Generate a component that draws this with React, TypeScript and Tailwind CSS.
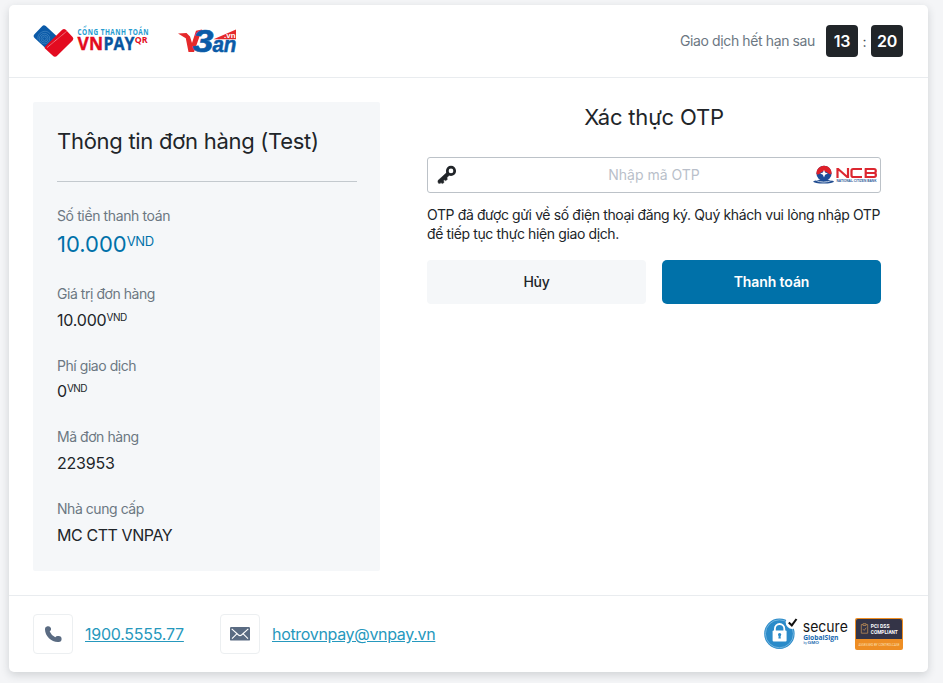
import React from "react";

function VnpayLogo() {
  return (
    <svg width="116" height="34" viewBox="0 0 116 34" className="block overflow-visible">
      <rect x="-9.6" y="-8.2" width="19.2" height="16.4" rx="2.6" transform="translate(12.3 12.8) rotate(43)" fill="#0b5aa8" />
      <g fill="none" stroke="#69a3d5" strokeWidth=".55" opacity=".8">
        <circle cx="11.5" cy="14.6" r="1.8" />
        <circle cx="11.5" cy="14.6" r="3.5" />
        <circle cx="11.5" cy="14.6" r="5.2" />
        <path d="M5 15.6a7 7 0 0 1 12-6" />
      </g>
      <path d="M12.2 22.4 29.2 5.8Q31 4.1 32.8 5.8L39.6 13Q41.2 14.6 39.6 16.4L24.4 31.6Q22 34 19.6 31.6L12 24.6Q11 23.6 12.2 22.4Z" fill="#e30b20" />
      <path d="M14 23.6 33.8 7.2" stroke="#fbd3d6" strokeWidth=".7" strokeDasharray="1 .5" fill="none" />
      <text x="54.6" y="11" transform="scale(.815 1)" fontFamily="Open Sans, sans-serif" fontWeight="700" fontSize="7.9" textLength="87" fill="#269bd0">CỔNG THANH TOÁN</text>
      <text y="26.2" fontFamily="Open Sans, sans-serif" fontWeight="700" fontSize="17.8" fill="#e30b20">
        <tspan x="44.6" textLength="25.4" lengthAdjust="spacingAndGlyphs" stroke="#e30b20" strokeWidth=".35">VN</tspan>
        <tspan x="70.4" textLength="31" lengthAdjust="spacingAndGlyphs" fill="#07549f" stroke="#07549f" strokeWidth=".35">PAY</tspan>
        <tspan x="101.8" y="19.4" fontSize="9.4" textLength="12.8" lengthAdjust="spacingAndGlyphs">QR</tspan>
      </text>
    </svg>
  );
}

function VbanLogo() {
  return (
    <svg width="60" height="26" viewBox="0 0 60 26" className="block overflow-visible">
      <path d="M0 5.5 8.5 5 12 8.5 14 15 18 2.8 24 1.4 16 24 10.5 24 7.8 10.2Z" fill="#e5292b" />
      <text x="0" y="0" transform="translate(14.8 23.6) scale(1.2 1)" fontFamily="Liberation Sans, sans-serif" fontWeight="700" fontStyle="italic" fontSize="31" fill="#0b5ba7" stroke="#0b5ba7" strokeWidth=".6">3</text>
      <path d="M35.5 11.2 58 1.5V11.2Z" fill="#e5292b" />
      <text y="23.8" fontFamily="Liberation Sans, sans-serif" fontWeight="700" fontStyle="italic" fontSize="21.5" fill="#0b5ba7">
        <tspan x="34.4" textLength="24" lengthAdjust="spacingAndGlyphs" stroke="#0b5ba7" strokeWidth=".5">an</tspan>
        <tspan x="46" y="10.3" fontSize="7" fontStyle="normal" textLength="11.5" lengthAdjust="spacingAndGlyphs" fill="#fff">.vn</tspan>
      </text>
    </svg>
  );
}

function KeyIcon() {
  return (
    <svg width="20" height="20" viewBox="0 0 20 20" className="block">
      <circle cx="14" cy="5.9" r="3.7" fill="none" stroke="#212529" strokeWidth="2.7" />
      <path d="M9.9 7.4 12.5 10 9.9 12.4 10.2 14.6 8.4 15.6 7.2 14.8 6.5 15.6 6.9 17.6 5.2 18.5 4 17.6 3.2 18.3H1.6L1 17V15.6Z" fill="#212529" stroke="#212529" strokeWidth=".6" strokeLinejoin="round" />
    </svg>
  );
}

function NcbLogo() {
  return (
    <svg width="64" height="20" viewBox="0 0 64 20" className="block shrink-0 overflow-visible">
      <ellipse cx="10.6" cy="16.6" rx="10.4" ry="2" fill="#234e91" />
      <path d="M2.5 15.2Q10.5 19 19 15.2" fill="none" stroke="#c2d2e6" strokeWidth="1" />
      <circle cx="11" cy="8.4" r="7.6" fill="#1c4d99" />
      <path d="M3.6 9C2.9 4.5 6.8.8 11 .8s8 3.5 7.5 8C16 10.8 14.6 6.3 11 6.3S6.5 11.1 3.6 9Z" fill="#df2029" />
      <path d="m11 4.8 1.1 2.7 2.8 1.1-2.8 1.1L11 12.4 9.9 9.7 7.1 8.6l2.8-1.1Z" fill="#fff" />
      <g fill="none" stroke="#dc2730" strokeWidth="2.2">
        <path d="M24.5 13V4h.7l9 8h.8V3" />
        <path d="M49 4H40.2Q38.5 4 38.5 5.7v4.6Q38.5 12 40.2 12H49" />
        <path d="M51.7 4H61Q62.8 4 62.8 5.9T61 8H52.7M61 8Q62.9 8.1 62.9 10T61 12H52.7V4" />
      </g>
      <text x="23.5" y="17" fontFamily="Liberation Sans, sans-serif" fontWeight="700" fontSize="2.7" textLength="40" lengthAdjust="spacingAndGlyphs" fill="#315c99">NATIONAL CITIZEN BANK</text>
    </svg>
  );
}

function PhoneIcon() {
  return (
    <svg width="18" height="18" viewBox="0 0 18 18" className="block" fill="#5a6b82">
      <path d="M1 4.4A3.1 3.1 0 0 1 7 3.2Q7.6 5.2 5.7 6.5Q7.2 10.2 11.3 12.2Q12.4 10.6 14.6 11A3 3 0 0 1 14.6 17C8 17.6 1 11 1 4.4Z" />
    </svg>
  );
}

function MailIcon() {
  return (
    <svg width="20" height="14" viewBox="0 0 20 14" className="block">
      <rect width="20" height="13.6" rx="1.2" fill="#5a6b82" />
      <path d="M1.7 1.8 8.5 8Q10 9.2 11.5 8L18.3 1.8M2 11.7 6.8 6.9M18 11.7 13.2 6.9" fill="none" stroke="#fff" strokeWidth="1.1" />
    </svg>
  );
}

function GlobalSignBadge() {
  return (
    <svg width="86" height="34" viewBox="0 0 86 34" className="block overflow-visible">
      <circle cx="15.4" cy="16.8" r="15.2" fill="#2b8bc9" />
      <circle cx="15.4" cy="16.8" r="14" fill="none" stroke="#91c5e6" strokeWidth=".7" />
      <circle cx="28.2" cy="5.5" r="6.5" fill="#fff" />
      <path d="m24.8 5.5 3 2.9L32.5 2" fill="none" stroke="#111" strokeWidth="2.1" />
      <path d="M10.9 14v-2.3a4.7 4.7 0 0 1 9.4 0V14" fill="none" stroke="#fff" strokeWidth="1.8" />
      <rect x="8.6" y="13.4" width="14" height="11.2" rx="1" fill="#fff" />
      <circle cx="15.6" cy="17.6" r="1.6" fill="#2b8bc9" />
      <path d="M14.8 17.6h1.6l.4 4h-2.4Z" fill="#2b8bc9" />
      <text fill="#1769af">
        <tspan x="38.8" y="14.8" fontFamily="Inter, sans-serif" fontSize="15" textLength="45" lengthAdjust="spacingAndGlyphs" fill="#151515">secure</tspan>
        <tspan x="39.2" y="22.6" fontFamily="Open Sans, sans-serif" fontWeight="700" fontSize="7" textLength="35.3" lengthAdjust="spacingAndGlyphs">GlobalSign</tspan>
        <tspan x="39.4" y="27" fontFamily="Liberation Sans, sans-serif" fontSize="3.2">by</tspan>
        <tspan x="43.6" y="27" fontFamily="Liberation Sans, sans-serif" fontWeight="700" fontSize="3.2" textLength="11.5" lengthAdjust="spacingAndGlyphs">GMO</tspan>
      </text>
    </svg>
  );
}

function PciBadge() {
  return (
    <svg width="48" height="32" viewBox="0 0 48 32" className="block overflow-visible">
      <rect width="48" height="32" rx="2" fill="#ee8e24" />
      <path d="M1 3q0-2 2-2h42q2 0 2 2v18H1Z" fill="#343447" />
      <path d="M8 6.5H6.3v8.7h6.4V6.5H11M8 5.7h3v1.8H8ZM8 11.2l1.2 1.2 2-2.7" fill="none" stroke="#a98054" strokeWidth=".9" />
      <text fontFamily="Roboto, sans-serif" fontWeight="700" fill="#fff">
        <tspan x="15.8" y="10" fontSize="5.8" textLength="18.7" lengthAdjust="spacingAndGlyphs">PCI DSS</tspan>
        <tspan x="15.8" y="15.8" fontSize="5.8" textLength="27" lengthAdjust="spacingAndGlyphs">COMPLIANT</tspan>
        <tspan x="3.5" y="27.6" fontSize="4" fontWeight="400" textLength="41" lengthAdjust="spacingAndGlyphs" fill="#fbe0bd">ASSESSED BY CONTROLCASE</tspan>
      </text>
    </svg>
  );
}

type DetailProps = { label: string; value: string; currency?: boolean };

function Detail({ label, value, currency }: DetailProps) {
  return (
    <div className="flex h-[71.67px] flex-col">
      <div className="h-[23.7px] text-[14px] leading-6 tracking-[-0.45px] text-[#6c7782]">{label}</div>
      <div className="flex h-7 items-start text-[16px] leading-7 text-[#212529]">
        <span className={/\d/.test(value) ? "tracking-[-0.2px]" : "tracking-[-0.42px]"}>{value}</span>
        {currency && <span className="text-[10px] leading-[23px] tracking-[-0.5px]">VND</span>}
      </div>
    </div>
  );
}

export default function App() {
  return (
    <div className="h-[683px] w-[943px] overflow-hidden bg-[#f4f5f7] pl-[9px] pt-[5px] font-['Inter',sans-serif] text-[#212529]">
      <main className="flex h-[667px] w-[919px] flex-col rounded-[5px] bg-white shadow-[0_3px_8px_rgba(30,40,50,0.17)]">
        <header className="flex h-[73px] items-center justify-between border-b border-[#e9ecef] px-6">
          <div className="flex items-center gap-[29px]">
            <VnpayLogo />
            <VbanLogo />
          </div>
          <div className="flex items-center pr-px">
            <span className="mr-[11px] pb-px text-[14px] tracking-[-0.38px] text-[#6c7782]">Giao dịch hết hạn sau</span>
            <span className="flex size-8 items-center justify-center rounded bg-[#212529] text-[16px] font-semibold tracking-[-0.2px] text-white">13</span>
            <span className="w-[13px] text-center text-[14px] text-[#495057]">:</span>
            <span className="flex size-8 items-center justify-center rounded bg-[#212529] text-[16px] font-semibold tracking-[-0.2px] text-white">20</span>
          </div>
        </header>

        <div className="flex h-[517px] items-start px-6 pt-6">
          <section className="h-[469px] w-[347px] rounded-[2px] bg-[#f5f7f9] pl-6 pr-[23px] pt-[23px]">
            <h1 className="h-8 text-[22px] leading-8 tracking-[-0.28px]">Thông tin đơn hàng (Test)</h1>
            <div className="mt-6 border-t border-[#c3c9ce]" />
            <div className="mt-[22px] h-[78px]">
              <div className="h-6 text-[14px] leading-6 tracking-[-0.38px] text-[#6c7782]">Số tiền thanh toán</div>
              <div className="flex items-start text-[22px] leading-8 text-[#0071a9]">
                <span>10.000</span>
                <span className="text-[13px] leading-[27px] tracking-[-0.3px]">VND</span>
              </div>
            </div>
            <Detail label="Giá trị đơn hàng" value="10.000" currency />
            <Detail label="Phí giao dịch" value="0" currency />
            <Detail label="Mã đơn hàng" value="223953" />
            <Detail label="Nhà cung cấp" value="MC CTT VNPAY" />
          </section>

          <section className="ml-[47px] w-[454px]">
            <h2 className="-mt-px h-8 text-center text-[22px] leading-8 tracking-[-0.2px]">Xác thực OTP</h2>
            <div className="mt-6 flex h-9 items-center rounded-[3px] border border-[#bcc2c8] pl-[9px] pr-[3px]">
              <KeyIcon />
              <input className="min-w-0 flex-1 bg-transparent pb-px pl-[38px] text-center text-[14px] outline-none placeholder:text-[#b9bfca] placeholder:opacity-100" placeholder="Nhập mã OTP" />
              <NcbLogo />
            </div>
            <p className="mt-3 whitespace-nowrap text-[14px] leading-[19px] tracking-[-0.38px]">
              OTP đã được gửi về số điện thoại đăng ký. Quý khách vui lòng nhập OTP
              <br />
              để tiếp tục thực hiện giao dịch.
            </p>
            <div className="mt-[17px] grid grid-cols-2 gap-4">
              <button className="h-11 rounded bg-[#f5f7f9] pb-0.5 text-[14px] font-medium tracking-[-0.3px]">Hủy</button>
              <button className="h-11 rounded-[5px] bg-[#0071a9] pb-0.5 text-[14px] font-semibold tracking-[-0.1px] text-white">Thanh toán</button>
            </div>
          </section>
        </div>

        <footer className="flex h-[77px] items-center justify-between border-t border-[#e9ecef] px-6">
          <div className="flex items-center text-[16px] text-[#2698bd]">
            <span className="mr-3 flex size-10 items-center justify-center rounded border border-[#eceff1]"><PhoneIcon /></span>
            <a className="w-[99px] whitespace-nowrap tracking-[-0.25px] underline" href="tel:1900555577">1900.5555.77</a>
            <span className="ml-9 mr-3 flex size-10 items-center justify-center rounded border border-[#eceff1]"><MailIcon /></span>
            <a className="tracking-[-0.32px] underline" href="mailto:hotrovnpay@vnpay.vn">hotrovnpay@vnpay.vn</a>
          </div>
          <div className="flex items-center gap-[5px] pr-px">
            <GlobalSignBadge />
            <PciBadge />
          </div>
        </footer>
      </main>
    </div>
  );
}
